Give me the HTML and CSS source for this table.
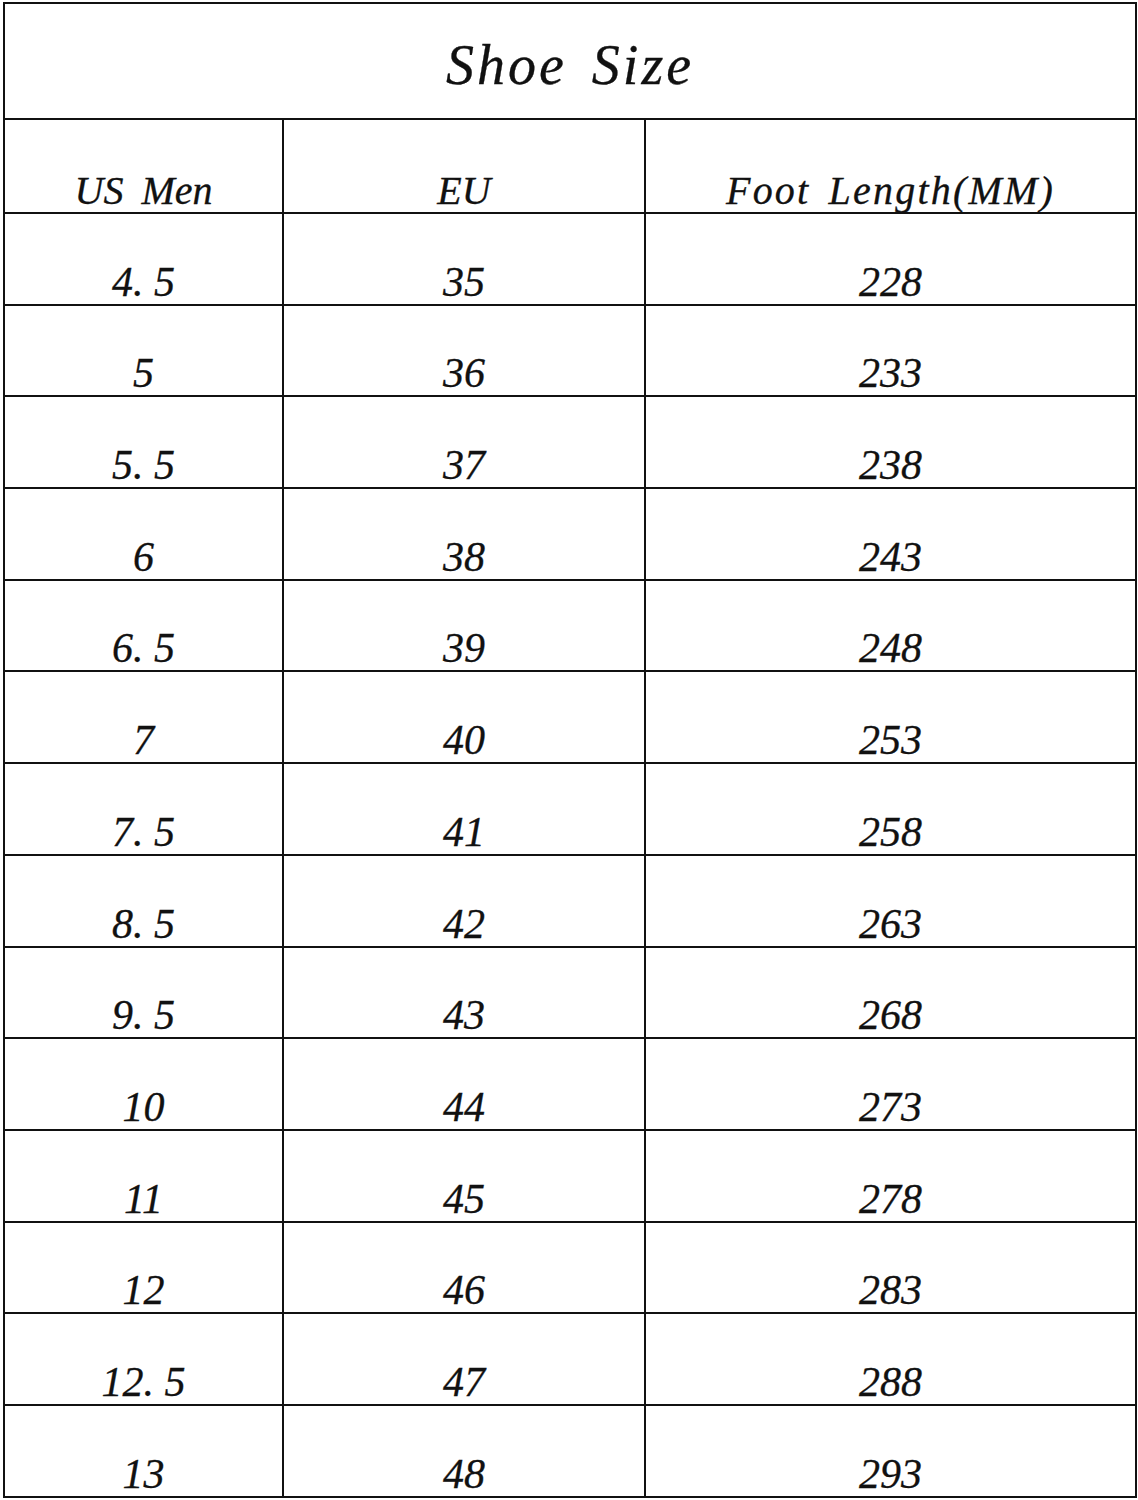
FILE: index.html
```html
<!DOCTYPE html>
<html lang="en">
<head>
<meta charset="utf-8">
<title>Shoe Size</title>
<link rel="stylesheet" href="styles.css">
</head>
<body>
<table class="size-table">
  <colgroup>
    <col class="c1">
    <col class="c2">
    <col class="c3">
  </colgroup>
  <thead>
    <tr class="title-row"><th colspan="3" class="title">Shoe Size</th></tr>
    <tr class="head-row">
      <th class="spaced">US Men</th>
      <th>EU</th>
      <th class="wide">Foot Length(MM)</th>
    </tr>
  </thead>
  <tbody>
    <tr><td>4. 5</td><td>35</td><td>228</td></tr>
    <tr><td>5</td><td>36</td><td>233</td></tr>
    <tr><td>5. 5</td><td>37</td><td>238</td></tr>
    <tr><td>6</td><td>38</td><td>243</td></tr>
    <tr><td>6. 5</td><td>39</td><td>248</td></tr>
    <tr><td>7</td><td>40</td><td>253</td></tr>
    <tr><td>7. 5</td><td>41</td><td>258</td></tr>
    <tr><td>8. 5</td><td>42</td><td>263</td></tr>
    <tr><td>9. 5</td><td>43</td><td>268</td></tr>
    <tr><td>10</td><td>44</td><td>273</td></tr>
    <tr><td>11</td><td>45</td><td>278</td></tr>
    <tr><td>12</td><td>46</td><td>283</td></tr>
    <tr><td>12. 5</td><td>47</td><td>288</td></tr>
    <tr><td>13</td><td>48</td><td>293</td></tr>
  </tbody>
</table>
</body>
</html>
```

FILE: styles.css
```css
html, body {
  margin: 0;
  padding: 0;
  background: #ffffff;
}

.size-table {
  margin: 2px 0 0 3px;
  width: 1132px;
  border-collapse: collapse;
  table-layout: fixed;
  font-family: "Liberation Serif", "Times New Roman", serif;
  font-style: italic;
  font-weight: normal;
  color: #111111;
  -webkit-text-stroke: 0.3px #111111;
}

.c1 { width: 279px; }
.c2 { width: 362px; }
.c3 { width: 491px; }

.size-table th,
.size-table td {
  border: 2px solid #111111;
  padding: 0;
  text-align: center;
  font-weight: normal;
  line-height: 1;
}

.title-row {
  height: 116px;
}

.size-table .title {
  font-size: 56px;
  letter-spacing: 3px;
  word-spacing: 8px;
  vertical-align: middle;
  padding-top: 8px;
}

.head-row {
  height: 94px;
}

.head-row th {
  font-size: 40px;
  vertical-align: bottom;
  padding-bottom: 1px;
}

.size-table .spaced {
  word-spacing: 8px;
}

.size-table .wide {
  letter-spacing: 2.2px;
  word-spacing: 6px;
}

.size-table tbody tr {
  height: 91.7px;
}

.size-table td {
  font-size: 42px;
  vertical-align: bottom;
  padding-bottom: 1px;
}
```
